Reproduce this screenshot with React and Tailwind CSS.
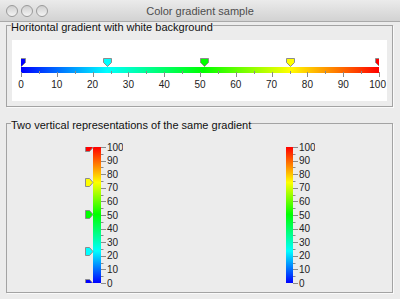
import React from "react"

// colour stops of the gradient = marker positions
const hStops = [
    { v: 0, c: "#0000ff" },
    { v: 24, c: "#00ffff" },
    { v: 51, c: "#00ff00" },
    { v: 75, c: "#ffff00" },
    { v: 100, c: "#ff0000" }
]

const vStops = [
    { v: 0, c: "#0000ff" },
    { v: 23.5, c: "#00ffff" },
    { v: 50.5, c: "#00ff00" },
    { v: 74, c: "#ffff00" },
    { v: 100, c: "#ff0000" }
]

const ticks = Array.from({ length: 21 }, (_, i) => i * 5)

function HorizontalGradient() {
    const x0 = 9
    const x1 = 367
    const sx = (v) => x0 + (v / 100) * (x1 - x0)

    return (
        <svg width="375" height="61" className="block">
            <defs>
                <linearGradient id="hg" x1="0" x2="1" y1="0" y2="0">
                    {hStops.map((s) => (
                        <stop key={s.v} offset={s.v / 100} stopColor={s.c} />
                    ))}
                </linearGradient>
                <clipPath id="hclip">
                    <rect x={x0} y="0" width={x1 - x0} height="61" />
                </clipPath>
            </defs>

            <rect x={x0} y="27" width={x1 - x0} height="6" fill="url(#hg)" />

            {/* ticks */}
            {ticks.map((v) => {
                const x = Math.round(sx(v)) + 0.5
                return (
                    <line
                        key={v}
                        x1={x}
                        x2={x}
                        y1={v % 10 === 0 ? 32 : 31}
                        y2={v % 10 === 0 ? 37 : 34}
                        stroke="#8a8a8a"
                        strokeWidth="1"
                    />
                )
            })}

            {/* labels */}
            {ticks
                .filter((v) => v % 10 === 0)
                .map((v) => (
                    <text
                        key={v}
                        x={v === 100 ? 374 : sx(v)}
                        y="47.5"
                        textAnchor={v === 100 ? "end" : "middle"}
                        fontSize="10"
                        fill="#222"
                        fontFamily="'Liberation Sans', Arial, sans-serif"
                    >
                        {v}
                    </text>
                ))}

            {/* markers */}
            <g clipPath="url(#hclip)">
                {hStops.map((s) => {
                    const x = Math.round(sx(s.v)) + 0.5
                    return (
                        <polygon
                            key={s.v}
                            points={`${x - 4},18.5 ${x + 4},18.5 ${x + 4},22.5 ${x},26.5 ${x - 4},22.5`}
                            fill={s.c}
                            stroke="#8c8c8c"
                            strokeWidth="1"
                        />
                    )
                })}
            </g>
        </svg>
    )
}

function VerticalGradient({ id, bx, bw, markers }) {
    const y0 = 152
    const y1 = 16
    const sy = (v) => y0 - (v / 100) * (y0 - y1)
    const right = bx + bw

    return (
        <svg width="40" height="160" className="block">
            <defs>
                <linearGradient id={id} x1="0" x2="0" y1="1" y2="0">
                    {vStops.map((s) => (
                        <stop key={s.v} offset={s.v / 100} stopColor={s.c} />
                    ))}
                </linearGradient>
                <clipPath id={id + "c"}>
                    <rect x="0" y={y1} width="40" height={y0 - y1} />
                </clipPath>
            </defs>

            <rect x={bx} y={y1} width={bw} height={y0 - y1} fill={`url(#${id})`} />

            {ticks.map((v) => {
                const y = Math.round(sy(v)) + 0.5
                return (
                    <line
                        key={v}
                        x1={right}
                        x2={right + (v % 10 === 0 ? 5 : 2.5)}
                        y1={y}
                        y2={y}
                        stroke="#8a8a8a"
                        strokeWidth="1"
                    />
                )
            })}

            {ticks
                .filter((v) => v % 10 === 0)
                .map((v) => (
                    <text
                        key={v}
                        x={right + 6}
                        y={sy(v) + 3.6}
                        fontSize="10"
                        fill="#222"
                        fontFamily="'Liberation Sans', Arial, sans-serif"
                    >
                        {v}
                    </text>
                ))}

            {markers && (
                <g clipPath={`url(#${id}c)`}>
                    {vStops.map((s) => {
                        const y = Math.round(sy(s.v)) + 0.5
                        return (
                            <polygon
                                key={s.v}
                                points={`2.5,${y - 4} 6.5,${y - 4} 10,${y} 6.5,${y + 4} 2.5,${y + 4}`}
                                fill={s.c}
                                stroke="#8c8c8c"
                                strokeWidth="1"
                            />
                        )
                    })}
                </g>
            )}
        </svg>
    )
}

export default function App() {
    return (
        <div className="w-[400px] h-[299px] overflow-hidden bg-[#ececec] flex flex-col font-['Liberation_Sans',Arial,sans-serif]">
            {/* Title bar */}
            <div className="h-[22px] shrink-0 grid grid-cols-[1fr_auto_1fr] items-center bg-gradient-to-b from-[#ebebeb] to-[#d2d2d2] border-b border-[#a9a9a9]">
                <div className="flex items-center gap-[3px] pl-[6px]">
                    <span className="w-[12px] h-[12px] rounded-full border border-[#9a9a9a] bg-gradient-to-b from-[#cfcfcf] to-[#f4f4f4]" />
                    <span className="w-[12px] h-[12px] rounded-full border border-[#9a9a9a] bg-gradient-to-b from-[#cfcfcf] to-[#f4f4f4]" />
                    <span className="w-[12px] h-[12px] rounded-full border border-[#9a9a9a] bg-gradient-to-b from-[#cfcfcf] to-[#f4f4f4]" />
                </div>
                <div className="text-[11px] leading-[14px] text-[#4d4d4d]">Color gradient sample</div>
                <div />
            </div>

            {/* Horizontal */}
            <fieldset className="ml-[6px] w-[387px] border border-[#a3a3a3] shadow-[1px_1px_0_#fafafa] pt-[11px] pb-[5px]">
                <legend className="ml-[4px] pt-[3px] text-[11px] leading-[4px] text-[#111]">
                    Horitontal gradient with white background
                </legend>
                <div className="mx-[5px] w-[375px] h-[61px] bg-white">
                    <HorizontalGradient />
                </div>
            </fieldset>

            {/* Vertical */}
            <fieldset className="ml-[6px] mt-[13px] w-[387px] border border-[#a3a3a3] shadow-[1px_1px_0_#fafafa] pt-[4px] pr-[1px] pb-[1px]">
                <legend className="ml-[4px] pt-[3px] text-[11px] leading-[4px] text-[#111]">
                    Two vertical representations of the same gradient
                </legend>
                <div className="grid grid-cols-2 justify-items-center">
                    <VerticalGradient id="vg1" bx={10} bw={8} markers />
                    <VerticalGradient id="vg2" bx={11} bw={7} />
                </div>
            </fieldset>
        </div>
    )
}
